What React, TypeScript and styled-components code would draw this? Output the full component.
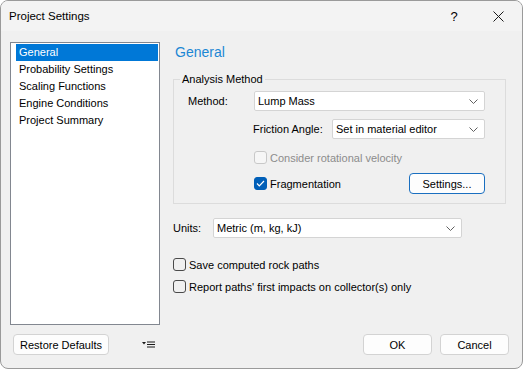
import styled, { createGlobalStyle } from "styled-components";

const GlobalStyle = createGlobalStyle`
  html, body {
    margin: 0;
    padding: 0;
    background: #ffffff;
  }
  body {
    font-family: "Liberation Sans", Arial, sans-serif;
    font-size: 11px;
    color: #000000;
  }
  * {
    box-sizing: border-box;
  }
`;

const Window = styled.div`
  width: 523px;
  height: 369px;
  border: 1px solid #9a9a9a;
  border-radius: 8px;
  overflow: hidden;
  background: #f0f0f0;
  display: flex;
  flex-direction: column;
`;

const TitleBar = styled.div`
  height: 30px;
  display: flex;
  align-items: center;
  padding: 0 2px 0 8px;
  background: #f3f3f3;
`;

const Title = styled.div`
  flex: 1;
  font-size: 11.5px;
`;

const TitleButton = styled.div`
  width: 44px;
  height: 30px;
  display: flex;
  align-items: center;
  justify-content: center;
  font-size: 13px;
`;

const Body = styled.div`
  flex: 1;
  display: flex;
  flex-direction: column;
  padding: 11px 13px 0 9px;
`;

const Main = styled.div`
  height: 283px;
  display: flex;
`;

const ListBox = styled.ul`
  width: 150px;
  margin: 0;
  padding: 1px 1px 0 5px;
  list-style: none;
  background: #ffffff;
  border: 1px solid #828790;
`;

const ListItem = styled.li<{ $selected?: boolean }>`
  height: 17px;
  line-height: 17px;
  padding-left: 3px;
  white-space: nowrap;
  background: ${(p) => (p.$selected ? "#0078d7" : "transparent")};
  color: ${(p) => (p.$selected ? "#ffffff" : "#000000")};
`;

const Content = styled.div`
  flex: 1;
  margin-left: 13px;
  display: flex;
  flex-direction: column;
`;

const Heading = styled.div`
  height: 22px;
  line-height: 20px;
  padding-left: 2px;
  font-size: 14px;
  color: #1c87d4;
`;

const Group = styled.fieldset`
  margin: 8px 0 0 0;
  width: 333px;
  padding: 5px 20px 9px 14px;
  border: 1px solid #dcdcdc;
  border-radius: 0;
  min-inline-size: 0;
`;

const Legend = styled.legend`
  margin-left: -8px;
  padding: 0 2px;
  line-height: 14px;
  font-size: 11px;
`;

const Row = styled.div<{ $indent?: number; $top?: number }>`
  display: flex;
  align-items: center;
  padding-left: ${(p) => p.$indent ?? 0}px;
  margin-top: ${(p) => p.$top ?? 0}px;
`;

const Label = styled.div<{ $width: number }>`
  width: ${(p) => p.$width}px;
  flex-shrink: 0;
  white-space: nowrap;
`;

const Select = styled.div<{ $width?: number }>`
  ${(p) => (p.$width ? `width: ${p.$width}px;` : "flex: 1;")}
  height: 20px;
  display: flex;
  align-items: center;
  padding: 0 6px 0 3px;
  background: #ffffff;
  border: 1px solid #d4d4d4;
  border-radius: 2px;
  white-space: nowrap;
`;

const SelectText = styled.span`
  flex: 1;
`;

const CheckRow = styled.label<{ $disabled?: boolean }>`
  display: flex;
  align-items: center;
  gap: 3px;
  height: 13px;
  white-space: nowrap;
  color: ${(p) => (p.$disabled ? "#8c8c8c" : "#000000")};
`;

const Box = styled.span<{ $checked?: boolean; $disabled?: boolean }>`
  width: 13px;
  height: 13px;
  flex-shrink: 0;
  border-radius: 3px;
  display: flex;
  align-items: center;
  justify-content: center;
  border: 1px solid
    ${(p) => (p.$checked ? "#005fb8" : p.$disabled ? "#c8c8c8" : "#4a4a4a")};
  background: ${(p) => (p.$checked ? "#005fb8" : p.$disabled ? "#f6f6f6" : "transparent")};
`;

const Button = styled.div<{ $width: number; $focus?: boolean }>`
  width: ${(p) => p.$width}px;
  height: 21px;
  display: flex;
  align-items: center;
  justify-content: center;
  background: #fdfdfd;
  border: 1px solid ${(p) => (p.$focus ? "#1a6fc0" : "#d3d3d3")};
  border-radius: 4px;
  white-space: nowrap;
`;

const Spacer = styled.div`
  flex: 1;
`;

const UnitsRow = styled.div`
  display: flex;
  align-items: center;
  margin-top: 14px;
`;

const Options = styled.div`
  display: flex;
  flex-direction: column;
  gap: 9px;
  margin-top: 20px;
`;

const Footer = styled.div`
  display: flex;
  align-items: center;
  margin-top: 9px;
  padding-left: 3px;
  gap: 8px;
`;

const MenuIcon = styled.div`
  margin-left: 25px;
  display: flex;
  align-items: center;
`;

const Chevron = () => (
  <svg width="9" height="5" viewBox="0 0 9 5">
    <path d="M0.5 0.5 L4.5 4.5 L8.5 0.5" fill="none" stroke="#606060" strokeWidth="1" />
  </svg>
);

const Check = () => (
  <svg width="9" height="7" viewBox="0 0 9 7">
    <path d="M1 3.5 L3.3 5.8 L8 1" fill="none" stroke="#ffffff" strokeWidth="1.2" />
  </svg>
);

const Dropdown = ({ value, width }: { value: string; width?: number }) => (
  <Select $width={width}>
    <SelectText>{value}</SelectText>
    <Chevron />
  </Select>
);

const CheckBox = ({
  label,
  checked,
  disabled,
}: {
  label: string;
  checked?: boolean;
  disabled?: boolean;
}) => (
  <CheckRow $disabled={disabled}>
    <Box $checked={checked} $disabled={disabled}>
      {checked && <Check />}
    </Box>
    {label}
  </CheckRow>
);

const pages = [
  "General",
  "Probability Settings",
  "Scaling Functions",
  "Engine Conditions",
  "Project Summary",
];

const App = () => {
  return (
    <>
      <GlobalStyle />
      <Window>
        <TitleBar>
          <Title>Project Settings</Title>
          <TitleButton>?</TitleButton>
          <TitleButton>
            <svg width="11" height="11" viewBox="0 0 11 11">
              <path d="M0.5 0.5 L10.5 10.5 M10.5 0.5 L0.5 10.5" stroke="#1a1a1a" strokeWidth="1" />
            </svg>
          </TitleButton>
        </TitleBar>
        <Body>
          <Main>
            <ListBox>
              {pages.map((page, i) => (
                <ListItem key={page} $selected={i === 0}>
                  {page}
                </ListItem>
              ))}
            </ListBox>
            <Content>
              <Heading>General</Heading>
              <Group>
                <Legend>Analysis Method</Legend>
                <Row>
                  <Label $width={66}>Method:</Label>
                  <Dropdown value="Lump Mass" />
                </Row>
                <Row $indent={65} $top={8}>
                  <Label $width={79}>Friction Angle:</Label>
                  <Dropdown value="Set in material editor" />
                </Row>
                <Row $indent={66} $top={12}>
                  <CheckBox label="Consider rotational velocity" disabled />
                </Row>
                <Row $indent={66} $top={9}>
                  <CheckBox label="Fragmentation" checked />
                  <Spacer />
                  <Button $width={76} $focus>
                    Settings...
                  </Button>
                </Row>
              </Group>
              <UnitsRow>
                <Label $width={40}>Units:</Label>
                <Dropdown value="Metric (m, kg, kJ)" width={249} />
              </UnitsRow>
              <Options>
                <CheckBox label="Save computed rock paths" />
                <CheckBox label="Report paths' first impacts on collector(s) only" />
              </Options>
            </Content>
          </Main>
          <Footer>
            <Button $width={96}>Restore Defaults</Button>
            <MenuIcon>
              <svg width="14" height="7" viewBox="0 0 14 7">
                <path d="M0 1 L4 1 L2 3.5 Z" fill="#1a1a1a" />
                <path d="M5 1 H13 M5 3.5 H13 M5 6 H13" stroke="#1a1a1a" strokeWidth="1" />
              </svg>
            </MenuIcon>
            <Spacer />
            <Button $width={69}>OK</Button>
            <Button $width={69}>Cancel</Button>
          </Footer>
        </Body>
      </Window>
    </>
  );
};

export default App;
